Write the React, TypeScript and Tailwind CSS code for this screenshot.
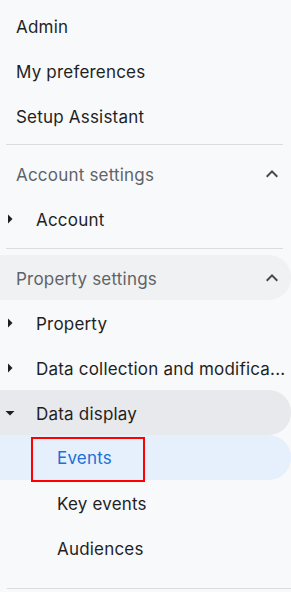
import React from 'react';

const font = { fontFamily: 'Inter, Roboto, "Noto Sans", sans-serif' };

function ChevronUp() {
  return (
    <svg width="24" height="24" viewBox="0 0 24 24" className="text-[#444746]">
      <path d="M7.41 15.41L12 10.83l4.59 4.58L18 14l-6-6-6 6z" fill="currentColor" />
    </svg>
  );
}

function ArrowRight() {
  return (
    <svg width="20" height="20" viewBox="0 0 20 20" className="shrink-0">
      <path d="M8 5.5l4.5 4.5L8 14.5z" fill="#1f1f1f" />
    </svg>
  );
}

function ArrowDown() {
  return (
    <svg width="20" height="20" viewBox="0 0 20 20" className="shrink-0">
      <path d="M5.5 8l4.5 4.5L14.5 8z" fill="#1f1f1f" />
    </svg>
  );
}

function Divider({ top }: { top: string }) {
  return <div className={`${top} mb-[6px] ml-[6px] mr-[8px] h-px bg-[#dadce0]`} />;
}

function Item({ label }: { label: string }) {
  return (
    <div className="h-[45px] flex items-center pl-4 pt-[4px] text-[17px] tracking-[0.2px] text-[#1f1f1f]">{label}</div>
  );
}

function Section({ label, shaded }: { label: string; shaded?: boolean }) {
  return (
    <div
      className={`h-[45px] flex items-center justify-between pl-4 pr-[7px] text-[17px] tracking-[0.2px] text-[#5f6368] rounded-r-[22px] ${
        shaded ? 'bg-[#f0f1f3]' : ''
      }`}
    >
      <span className="pt-[4px]">{label}</span>
      <ChevronUp />
    </div>
  );
}

function Branch({ label, open, shaded }: { label: string; open?: boolean; shaded?: boolean }) {
  return (
    <div
      className={`h-[45px] flex items-center text-[17px] tracking-[0.2px] text-[#1f1f1f] rounded-r-[22px] ${
        shaded ? 'bg-[#e8e9ec]' : ''
      }`}
    >
      <div className="w-9 shrink-0 flex justify-start">{open ? <ArrowDown /> : <ArrowRight />}</div>
      <span className="whitespace-nowrap pt-[4px]">{label}</span>
    </div>
  );
}

function Leaf({ label, active }: { label: string; active?: boolean }) {
  return (
    <div
      className={`h-[45px] flex items-center text-[17px] tracking-[0.2px] rounded-r-[22px] ${
        active ? 'bg-[#e6f0fd] text-[#1a6fd8]' : 'text-[#1f1f1f]'
      }`}
    >
      {active ? (
        <div className="ml-[31px] h-[45px] w-[114px] border-2 border-[#ff0000] flex items-center pl-[24px] mt-[4px]">
          <span className="-mt-[1px]">{label}</span>
        </div>
      ) : (
        <span className="pl-[57px] pt-[4px]">{label}</span>
      )}
    </div>
  );
}

export default function App() {
  return (
    <div className="min-h-screen w-full bg-[#f8f9fb] pt-[3px] overflow-hidden" style={font}>
      <Item label="Admin" />
      <Item label="My preferences" />
      <Item label="Setup Assistant" />
      <Divider top="mt-[6px]" />
      <Section label="Account settings" />
      <Branch label="Account" />
      <Divider top="mt-[7px]" />
      <Section label="Property settings" shaded />
      <Branch label="Property" />
      <Branch label="Data collection and modifica..." />
      <Branch label="Data display" open shaded />
      <Leaf label="Events" active />
      <Leaf label="Key events" />
      <Leaf label="Audiences" />
      <div className="mt-[18px] ml-[7px] h-px bg-[#dadce0]" />
    </div>
  );
}
